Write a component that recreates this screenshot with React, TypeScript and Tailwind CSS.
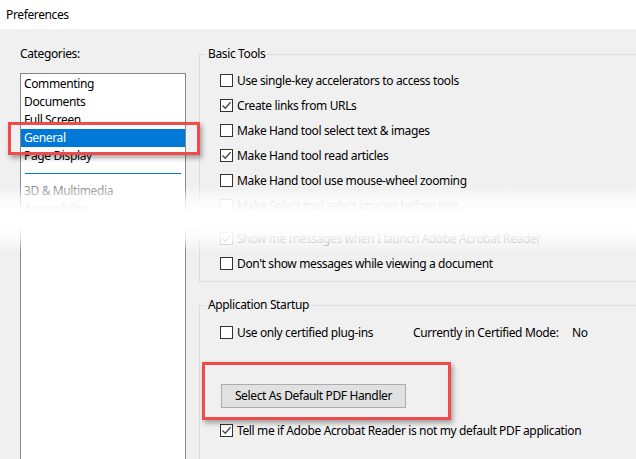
import React from "react";

function Check({ checked, disabled }: { checked?: boolean; disabled?: boolean }) {
  return (
    <span
      className={
        "w-[13px] h-[13px] shrink-0 border bg-white flex items-center justify-center " +
        (disabled ? "border-[#bcbcbc]" : "border-[#333333]")
      }
    >
      {checked && (
        <svg width="11" height="11" viewBox="0 0 11 11">
          <path d="M1.5 5.5 L4.2 8.2 L9.6 2.2" fill="none" stroke={disabled ? "#bcbcbc" : "#444"} strokeWidth="1.3" />
        </svg>
      )}
    </span>
  );
}

function Row({ label, checked, disabled, extra }: { label: string; checked?: boolean; disabled?: boolean; extra?: string }) {
  return (
    <div className={"h-[25px] flex items-center gap-[4px] pl-[20px] " + (extra || "")}>
      <Check checked={checked} disabled={disabled} />
      <span className={"whitespace-nowrap " + (disabled ? "text-[#a0a0a0]" : "text-black")}>{label}</span>
    </div>
  );
}

export default function App() {
  const cats = ["Commenting", "Documents", "Full Screen", "General", "Page Display"];
  return (
    <div className="relative w-[636px] h-[459px] overflow-hidden bg-[#f0f0f0] text-[12px] leading-[16px] tracking-[-0.37px] text-black font-['Noto_Sans',sans-serif]">
      <div className="h-[29px] bg-white flex items-center pl-[6px]">Preferences</div>
      <div className="flex">
        <div className="w-[199px] shrink-0 pl-[20px]">
          <div className="pt-[17px] h-[33px]">Categories:</div>
          <div className="mt-[11px] w-[166px] h-[400px] border border-[#828790] bg-white pt-[1px]">
            {cats.map((c) => (
              <div
                key={c}
                className={
                  "h-[18px] flex items-center pl-[3px] " +
                  (c === "General" ? "bg-[#0078d7] text-white" : "text-black")
                }
              >
                {c}
              </div>
            ))}
            <div className="h-[17px] flex items-center px-[4px]">
              <div className="h-[1px] w-full bg-[#0078d7]" />
            </div>
            <div className="h-[18px] flex items-center pl-[3px] text-[#8a8a8a]">3D &amp; Multimedia</div>
            <div className="h-[18px] flex items-center pl-[3px] text-[#8a8a8a]">Accessibility</div>
          </div>
        </div>
        <div className="flex-1">
          <fieldset className="mt-[17px] w-[520px] border-l border-t border-b border-r-0 border-[#dcdcdc] pb-[5px]">
            <legend className="ml-[6px] px-[2px]">Basic Tools</legend>
            <div className="pt-[6px]">
              <Row label="Use single-key accelerators to access tools" />
              <Row label="Create links from URLs" checked />
              <Row label="Make Hand tool select text & images" />
              <Row label="Make Hand tool read articles" checked />
              <Row label="Make Hand tool use mouse-wheel zooming" />
              <Row label="Make Select tool select images before text" disabled />
              <Row label="Show me messages when I launch Adobe Acrobat Reader" checked disabled extra="mt-[8px]" />
              <Row label="Don't show messages while viewing a document" />
            </div>
          </fieldset>
          <fieldset className="mt-[15px] w-[520px] h-[200px] border-l border-t border-r-0 border-b-0 border-[#dcdcdc]">
            <legend className="ml-[6px] px-[2px]">Application Startup</legend>
            <div className="pt-[7px]">
              <div className="h-[25px] flex items-center pl-[20px]">
                <div className="w-[193px] flex items-center gap-[4px]">
                  <Check />
                  <span className="whitespace-nowrap">Use only certified plug-ins</span>
                </div>
                <span className="w-[159px] whitespace-nowrap">Currently in Certified Mode:</span>
                <span>No</span>
              </div>
              <div className="mt-[39px] ml-[21px] w-[185px] h-[24px] bg-[#e1e1e1] border border-[#adadad] flex items-center justify-center">
                Select As Default PDF Handler
              </div>
              <Row label="Tell me if Adobe Acrobat Reader is not my default PDF application" checked extra="mt-[10px]" />
            </div>
          </fieldset>
        </div>
      </div>

      {/* torn fade band */}
      <div className="absolute left-0 top-[186px] w-full h-[66px] pointer-events-none bg-[linear-gradient(to_bottom,rgba(255,255,255,0)_0%,rgba(255,255,255,0.75)_22%,rgba(255,255,255,1)_40%,rgba(255,255,255,1)_62%,rgba(255,255,255,0.72)_80%,rgba(255,255,255,0)_100%)]" />

      {/* red highlight boxes */}
      <div className="absolute left-[8px] top-[122px] w-[192px] h-[33px] border-[3px] border-[#f04a4a] shadow-[2px_3px_5px_rgba(0,0,0,0.35)]" />
      <div className="absolute left-[202px] top-[362px] w-[249px] h-[58px] border-[3px] border-[#f04a4a] shadow-[2px_3px_5px_rgba(0,0,0,0.35)]" />
    </div>
  );
}
